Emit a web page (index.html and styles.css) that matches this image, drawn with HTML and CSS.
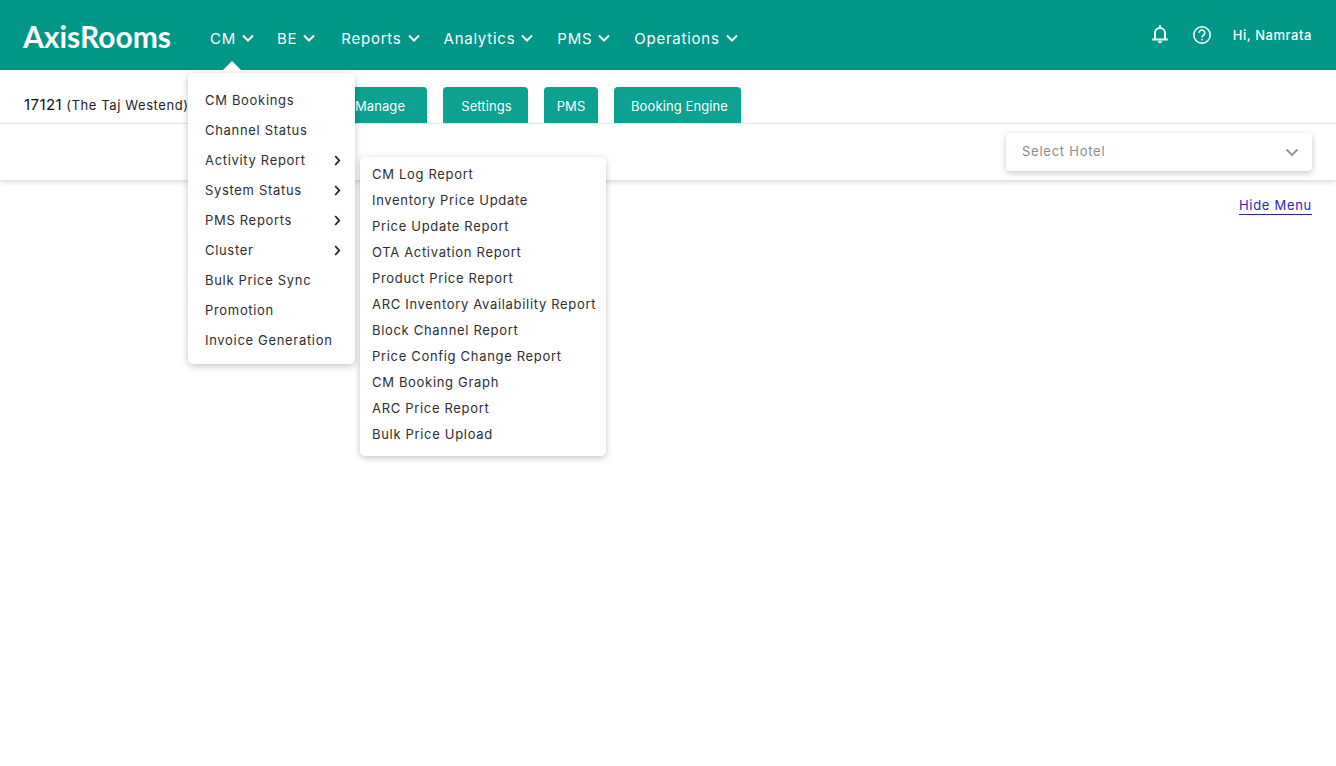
FILE: index.html
```html
<!DOCTYPE html>
<html lang="en">
<head>
<meta charset="utf-8">
<title>AxisRooms</title>
<link rel="stylesheet" href="styles.css">
</head>
<body>
<header class="topbar">
  <div class="logo">AxisRooms</div>
  <nav class="nav">
    <div class="nav-item nav-cm">CM <svg class="chev" viewBox="0 0 12 8"><path d="M1 1.5l5 5 5-5"/></svg>
      <span class="caret"></span>
    </div>
    <div class="nav-item nav-be">BE <svg class="chev" viewBox="0 0 12 8"><path d="M1 1.5l5 5 5-5"/></svg></div>
    <div class="nav-item">Reports <svg class="chev" viewBox="0 0 12 8"><path d="M1 1.5l5 5 5-5"/></svg></div>
    <div class="nav-item">Analytics <svg class="chev" viewBox="0 0 12 8"><path d="M1 1.5l5 5 5-5"/></svg></div>
    <div class="nav-item">PMS <svg class="chev" viewBox="0 0 12 8"><path d="M1 1.5l5 5 5-5"/></svg></div>
    <div class="nav-item">Operations <svg class="chev" viewBox="0 0 12 8"><path d="M1 1.5l5 5 5-5"/></svg></div>
  </nav>
  <div class="user">
    <svg class="bell" viewBox="0 0 18 20"><path d="M9 1v2.2M4 15V9a5 5 0 0 1 10 0v6M1.2 15.6h15.6"/><path class="fill" d="M7 17.2h4a2 2 0 0 1-4 0z"/></svg>
    <svg class="help" viewBox="0 0 20 20"><circle cx="10" cy="10" r="8.2"/><path d="M7.2 7.8a2.8 2.8 0 1 1 4.3 2.4c-1 .6-1.5 1.1-1.5 2.2"/><circle class="fill" cx="10" cy="14.6" r=".9"/></svg>
    <span class="hi">Hi, Namrata</span>
  </div>
</header>

<section class="tabrow">
  <div class="hotel"><span class="hotel-id">17121</span> (<span class="hotel-name">The Taj Westend</span>)</div>
  <div class="tabs">
    <a class="tab tab-manage">Manage</a>
    <a class="tab tab-settings">Settings</a>
    <a class="tab tab-pms">PMS</a>
    <a class="tab tab-be">Booking Engine</a>
  </div>
</section>

<section class="filterrow">
  <div class="select">
    <span>Select Hotel</span>
    <svg class="select-chev" viewBox="0 0 14 9"><path d="M1.5 1.5l5.5 5.5 5.5-5.5"/></svg>
  </div>
</section>

<div class="hide-row"><a class="hide-link">Hide Menu</a></div>

<ul class="menu menu-main">
  <li>CM Bookings</li>
  <li>Channel Status</li>
  <li>Activity Report <svg class="sub" viewBox="0 0 7 11"><path d="M1.2 1l4 4.5-4 4.5"/></svg></li>
  <li>System Status <svg class="sub" viewBox="0 0 7 11"><path d="M1.2 1l4 4.5-4 4.5"/></svg></li>
  <li>PMS Reports <svg class="sub" viewBox="0 0 7 11"><path d="M1.2 1l4 4.5-4 4.5"/></svg></li>
  <li>Cluster <svg class="sub" viewBox="0 0 7 11"><path d="M1.2 1l4 4.5-4 4.5"/></svg></li>
  <li>Bulk Price Sync</li>
  <li>Promotion</li>
  <li>Invoice Generation</li>
</ul>

<ul class="menu menu-sub">
  <li>CM Log Report</li>
  <li>Inventory Price Update</li>
  <li>Price Update Report</li>
  <li>OTA Activation Report</li>
  <li>Product Price Report</li>
  <li>ARC Inventory Availability Report</li>
  <li>Block Channel Report</li>
  <li>Price Config Change Report</li>
  <li>CM Booking Graph</li>
  <li>ARC Price Report</li>
  <li>Bulk Price Upload</li>
</ul>
</body>
</html>
```
FILE: styles.css
```css
* { box-sizing: border-box; }
html, body { margin: 0; padding: 0; }
body {
  background: #fff;
  font-family: "Inter", "Liberation Sans", sans-serif;
  color: #222;
  height: 766px;
  overflow: hidden;
  position: relative;
}
.topbar {
  height: 70px;
  background: #009688;
  color: #fff;
  display: flex;
  align-items: center;
  padding: 0 24px 0 23px;
}
.logo {
  font-family: "Lato", sans-serif;
  font-size: 30px;
  font-weight: 700;
  width: 187px;
  margin-top: 1px;
}
.nav { display: flex; margin-top: 6px; }
.nav-item {
  position: relative;
  font-size: 15px;
  letter-spacing: 0.75px;
  white-space: nowrap;
  display: flex;
  align-items: center;
  margin-right: 24px;
}
.nav-cm { margin-right: 23px; }
.nav-be { margin-right: 26px; }
.chev { width: 12px; height: 8px; margin-left: 6px; fill: none; stroke: #fff; stroke-width: 2; }
.caret {
  position: absolute;
  left: 13px;
  top: 32px;
  border-left: 9px solid transparent;
  border-right: 9px solid transparent;
  border-bottom: 9px solid #fff;
}
.user { margin-left: auto; display: flex; align-items: center; }
.bell { width: 18px; height: 20px; fill: none; stroke: #fff; stroke-width: 2; margin: -2px 23px 0 0; }
.help { width: 20px; height: 20px; fill: none; stroke: #fff; stroke-width: 1.6; margin-right: 21px; }
.fill { fill: #fff; stroke: none; }
.hi { font-size: 13px; letter-spacing: 0.55px; font-weight: 500; margin-top: -1px; }

.tabrow {
  height: 54px;
  border-bottom: 1px solid #e4e4e4;
  display: flex;
  position: relative;
}
.hotel { font-size: 13px; letter-spacing: 0.6px; padding: 25px 0 0 24px; width: 331px; white-space: nowrap; }
.hotel-id { font-size: 15px; color: #111; letter-spacing: 0.4px; }
.tabs { display: flex; padding-top: 17px; }
.tab {
  background: #0ca190;
  color: #fff;
  height: 36px;
  border-radius: 4px 4px 0 0;
  font-size: 13px;
  letter-spacing: 0.1px;
  display: flex;
  align-items: center;
  justify-content: center;
  padding: 2px 0 0 2px;
}
.tab-manage { width: 96px; margin-right: 16px; }
.tab-settings { width: 85px; margin-right: 16px; }
.tab-pms { width: 54px; margin-right: 16px; padding-left: 0; }
.tab-be { width: 127px; padding-left: 4px; }

.filterrow {
  height: 56px;
  background: #fff;
  box-shadow: 0 2px 5px rgba(0,0,0,0.16);
  display: flex;
  justify-content: flex-end;
  padding: 9px 24px 0 0;
}
.select {
  width: 306px;
  height: 38px;
  border-radius: 4px;
  background: #fff;
  box-shadow: 0 2px 6px rgba(0,0,0,0.22);
  display: flex;
  align-items: center;
  justify-content: space-between;
  padding: 0 13px 2px 16px;
  font-size: 13px;
  letter-spacing: 0.75px;
  color: #8c8c8c;
}
.select-chev { width: 14px; height: 9px; fill: none; stroke: #9a9a9a; stroke-width: 2.2; margin-top: 2px; }
.hide-row { display: flex; justify-content: flex-end; padding: 17px 24px 0 0; }
.hide-link {
  font-size: 13px;
  letter-spacing: 0.7px;
  color: #2a1fb8;
  border-bottom: 1px solid #2a1fb8;
  line-height: 17px;
}

.menu {
  position: absolute;
  list-style: none;
  margin: 0;
  background: #fff;
  border-radius: 5px;
  box-shadow: 0 2px 7px rgba(0,0,0,0.24);
  font-size: 13px;
  letter-spacing: 0.68px;
  color: #2e2e2e;
  white-space: nowrap;
}
.menu-main { left: 188px; top: 73px; width: 167px; height: 291px; padding: 12px 0 0 17px; }
.menu-main li { height: 30px; line-height: 30px; position: relative; }
.sub { position: absolute; left: 129px; top: 10px; width: 7px; height: 11px; fill: none; stroke: #222; stroke-width: 1.8; }
.menu-sub { left: 360px; top: 157px; width: 246px; height: 299px; padding: 4px 0 0 12px; }
.menu-sub li { height: 26px; line-height: 26px; }
```
